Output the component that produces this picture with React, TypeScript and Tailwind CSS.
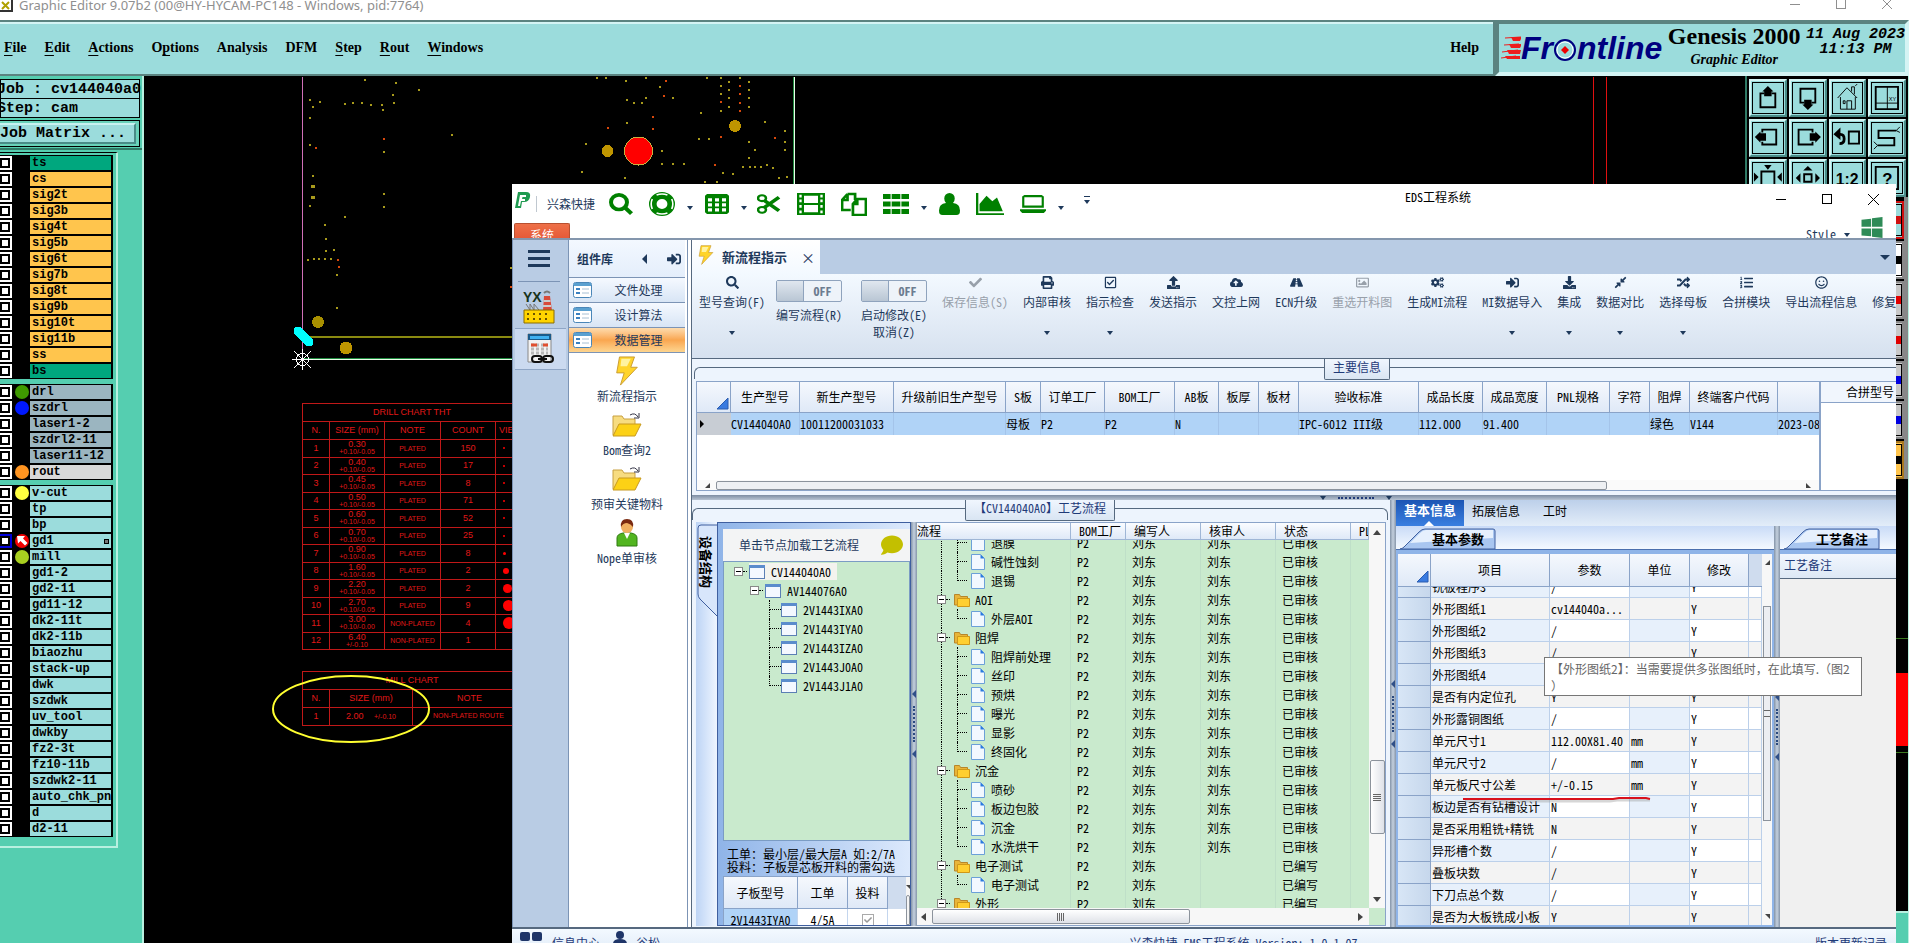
import type { JSX, ReactNode } from 'react';
import {
  FaCheck,
  FaCloudUploadAlt,
  FaCogs,
  FaComment,
  FaCompressAlt,
  FaDownload,
  FaListOl,
  FaPrint,
  FaRandom,
  FaRegCheckSquare,
  FaRegImage,
  FaRegSmile,
  FaRoad,
  FaSearch,
  FaSignInAlt,
  FaUpload
} from 'react-icons/fa';

type Layer = { name: string; dot?: string; active?: boolean };
type Status = '已审核' | '已编写';
type ProcessRow = { name: string; kind: 'folder' | 'step'; last?: boolean; reviewed: boolean; status: Status };

function cx(...classNames: Array<string | false | null | undefined>): string {
  return classNames.filter(Boolean).join(' ');
}

const signalLayers = ['cs', 'sig2t', 'sig3b', 'sig4t', 'sig5b', 'sig6t', 'sig7b', 'sig8t', 'sig9b', 'sig10t', 'sig11b', 'ss'];

const drillLayers: Layer[] = [
  { name: 'drl', dot: 'bg-[#3f9a00]' },
  { name: 'szdrl', dot: 'bg-[#0018ff]' },
  { name: 'laser1-2' },
  { name: 'szdrl2-11' },
  { name: 'laser11-12' }
];

const miscLayers: Layer[] = [
  { name: 'v-cut', dot: 'bg-[#ffff40]' },
  { name: 'tp' },
  { name: 'bp' },
  { name: 'gd1', dot: 'bg-[#f00000]', active: true },
  { name: 'mill', dot: 'bg-[#a9d020]' },
  { name: 'gd1-2' },
  { name: 'gd2-11' },
  { name: 'gd11-12' },
  { name: 'dk2-11t' },
  { name: 'dk2-11b' },
  { name: 'biaozhu' },
  { name: 'stack-up' },
  { name: 'dwk' },
  { name: 'szdwk' },
  { name: 'uv_tool' },
  { name: 'dwkby' },
  { name: 'fz2-3t' },
  { name: 'fz10-11b' },
  { name: 'szdwk2-11' },
  { name: 'auto_chk_pnl' },
  { name: 'd' },
  { name: 'd2-11' }
];

const menus: Array<[string, string, string]> = [
  ['', 'F', 'ile'],
  ['', 'E', 'dit'],
  ['', 'A', 'ctions'],
  ['O', 'p', 'tions'],
  ['', '', 'Analysis'],
  ['', '', 'DFM'],
  ['', 'S', 'tep'],
  ['', 'R', 'out'],
  ['', 'W', 'indows']
];

const drillRows: Array<[string, string, string, string, string]> = [
  ['1', '0.30', '+0.10/-0.05', 'PLATED', '150'],
  ['2', '0.40', '+0.10/-0.05', 'PLATED', '17'],
  ['3', '0.45', '+0.10/-0.05', 'PLATED', '8'],
  ['4', '0.50', '+0.10/-0.05', 'PLATED', '71'],
  ['5', '0.60', '+0.10/-0.05', 'PLATED', '52'],
  ['6', '0.70', '+0.10/-0.05', 'PLATED', '25'],
  ['7', '0.90', '+0.10/-0.05', 'PLATED', '8'],
  ['8', '1.60', '+0.10/-0.05', 'PLATED', '2'],
  ['9', '2.20', '+0.10/-0.05', 'PLATED', '2'],
  ['10', '2.70', '+0.10/-0.05', 'PLATED', '9'],
  ['11', '3.00', '+0.10/-0.00', 'NON-PLATED', '4'],
  ['12', '6.40', '+/-0.10', 'NON-PLATED', '1']
];

const drillMarks = [2, 2, 2, 2, 2, 2, 3, 6, 9, 11, 12, 0];

const pads: Array<[number, number]> = [
  [365, 80], [396, 83], [419, 90], [393, 95], [394, 103], [310, 100], [320, 102], [313, 107], [310, 118],
  [345, 104], [353, 103], [362, 103], [371, 105], [382, 105], [383, 110], [310, 145], [384, 152],
  [452, 135], [313, 176], [310, 206], [384, 194], [384, 207], [345, 217], [325, 225],
  [326, 239], [326, 251], [334, 250], [308, 260], [314, 259], [319, 259], [325, 259], [331, 259],
  [337, 275], [337, 308], [511, 268], [597, 78], [606, 78], [626, 81], [646, 78], [660, 87],
  [673, 98], [627, 100], [634, 103], [642, 103], [646, 98], [627, 123],
  [586, 144], [662, 151], [662, 164], [673, 164], [684, 164], [582, 172], [625, 178], [701, 113], [699, 139], [709, 139],
  [723, 173], [733, 174], [705, 182], [717, 182], [749, 142], [755, 150], [749, 158], [743, 167],
  [750, 167], [755, 167], [761, 167], [767, 165], [773, 168], [779, 178], [787, 177], [785, 150], [785, 142],
  [785, 131], [765, 122], [707, 78], [721, 78], [740, 78], [721, 86], [729, 82], [749, 82], [729, 90], [749, 90],
  [721, 94], [729, 98], [749, 98], [721, 111], [729, 107], [749, 107]
];

const redPads: Array<[number, number]> = [
  [316, 148], [384, 139], [338, 260], [339, 267], [511, 287], [666, 81], [664, 96], [653, 117], [653, 129], [608, 128],
  [721, 137], [715, 165], [775, 138], [740, 86], [740, 94], [740, 103], [721, 102], [740, 111]
];

const infoColumns: Array<[string, string, string]> = [
  ['生产型号', 'CV144040A0', 'w-[69px]'],
  ['新生产型号', '10011200031033', 'w-[94px]'],
  ['升级前旧生产型号', '', 'w-[112px]'],
  ['S板', '母板', 'w-[35px]'],
  ['订单工厂', 'P2', 'w-[64px]'],
  ['BOM工厂', 'P2', 'w-[70px]'],
  ['AB板', 'N', 'w-[44px]'],
  ['板厚', '', 'w-[40px]'],
  ['板材', '', 'w-[40px]'],
  ['验收标准', 'IPC-6012 III级', 'w-[120px]'],
  ['成品长度', '112.000', 'w-[64px]'],
  ['成品宽度', '91.400', 'w-[64px]'],
  ['PNL规格', '', 'w-[63px]'],
  ['字符', '', 'w-[40px]'],
  ['阻焊', '绿色', 'w-[40px]'],
  ['终端客户代码', 'V144', 'w-[88px]'],
  ['', '2023-08', 'w-[42px]']
];

const processRows: ProcessRow[] = [
  { name: '退膜', kind: 'step', reviewed: true, status: '已审核' },
  { name: '碱性蚀刻', kind: 'step', reviewed: true, status: '已审核' },
  { name: '退锡', kind: 'step', last: true, reviewed: true, status: '已审核' },
  { name: 'AOI', kind: 'folder', reviewed: true, status: '已审核' },
  { name: '外层AOI', kind: 'step', last: true, reviewed: true, status: '已审核' },
  { name: '阻焊', kind: 'folder', reviewed: true, status: '已审核' },
  { name: '阻焊前处理', kind: 'step', reviewed: true, status: '已审核' },
  { name: '丝印', kind: 'step', reviewed: true, status: '已审核' },
  { name: '预烘', kind: 'step', reviewed: true, status: '已审核' },
  { name: '曝光', kind: 'step', reviewed: true, status: '已审核' },
  { name: '显影', kind: 'step', reviewed: true, status: '已审核' },
  { name: '终固化', kind: 'step', last: true, reviewed: true, status: '已审核' },
  { name: '沉金', kind: 'folder', reviewed: true, status: '已审核' },
  { name: '喷砂', kind: 'step', reviewed: true, status: '已审核' },
  { name: '板边包胶', kind: 'step', reviewed: true, status: '已审核' },
  { name: '沉金', kind: 'step', reviewed: true, status: '已审核' },
  { name: '水洗烘干', kind: 'step', last: true, reviewed: true, status: '已审核' },
  { name: '电子测试', kind: 'folder', reviewed: false, status: '已编写' },
  { name: '电子测试', kind: 'step', last: true, reviewed: false, status: '已编写' },
  { name: '外形', kind: 'folder', reviewed: false, status: '已编写' }
];

const paramRows: Array<[string, string, string]> = [
  ['铣板程序3', '/', ''],
  ['外形图纸1', 'cv144040a...', ''],
  ['外形图纸2', '/', ''],
  ['外形图纸3', '/', ''],
  ['外形图纸4', '/', ''],
  ['是否有内定位孔', 'Y', ''],
  ['外形露铜图纸', '/', ''],
  ['单元尺寸1', '112.00X81.40', 'mm'],
  ['单元尺寸2', '/', 'mm'],
  ['单元板尺寸公差', '+/-0.15', 'mm'],
  ['板边是否有钻槽设计', 'N', ''],
  ['是否采用粗铣+精铣', 'N', ''],
  ['异形槽个数', '/', ''],
  ['叠板块数', '/', ''],
  ['下刀点总个数', '/', ''],
  ['是否为大板铣成小板', 'Y', '']
];

/* ---------- Genesis 2000 (background window) ---------- */

function LayerRow({ layer, color }: { layer: Layer; color: string }): JSX.Element {
  return (
    <label className="flex h-4 items-center bg-black">
      <input
        type="checkbox"
        aria-label={layer.name}
        className={cx(
          'mr-0.5 h-3.5 w-3 shrink-0 appearance-none border-y-2 border-r-2 bg-black bg-[linear-gradient(#fff,#fff)] bg-size-[6px_6px] bg-position-[2px_2px] bg-no-repeat',
          layer.active ? 'border-[#0000d8]' : 'border-white'
        )}
      />
      <span className="flex w-4 shrink-0 justify-center">
        {layer.dot ? (
          <span className={cx('flex h-3.5 w-3.5 items-center justify-center rounded-full', layer.dot)}>
            {layer.active ? (
              <svg viewBox="0 0 14 14" className="h-3.5 w-3.5" fill="#fff" aria-hidden="true">
                <path d="M2 2h8L8 4.500l4.500 4.500-2.500 2.500L5.500 7 3 9.500z" />
              </svg>
            ) : null}
          </span>
        ) : null}
      </span>
      <span className={cx('flex h-3.5 w-[81px] items-center justify-between overflow-hidden pl-0.5 text-[12px] leading-3.5 font-bold whitespace-nowrap', color)}>
        {layer.name}
        {layer.active ? <span className="mr-0.5 h-[5px] w-[5px] border border-black bg-[#777]" /> : null}
      </span>
    </label>
  );
}

function Sidebar(): JSX.Element {
  return (
    <aside className="w-36 shrink-0 overflow-hidden border-r-2 border-[#b8f0e0] bg-[#55ceb0] font-['Liberation_Mono',monospace]">
      <div className="border-b-2 border-[#2f7a66] pt-[3px] pb-px">
        <div className="mr-0.5 border border-black bg-[#9bdcdc] text-[15px] leading-[19px] font-bold whitespace-nowrap">
          <div className="-ml-1 h-[18px]">Job : cv144040a0</div>
          <div className="h-[19px] border-t border-black">
            <span className="-ml-1">Step: cam</span>
          </div>
        </div>
        <div className="mt-0.5 mr-0.5 border border-l-0 border-black bg-[#69d2ba] py-0.5 pr-[3px]">
          <button className="block h-[21px] w-full border-t-2 border-r-2 border-b-2 border-t-[#c8f2f0] border-r-[#4a8c88] border-b-[#4a8c88] bg-[#9bdcdc] text-left text-[15px] leading-4 font-bold">Job Matrix ...</button>
        </div>
      </div>
      <div className="mt-0.5 w-[118px] border-t border-r-2 border-b-2 border-t-black border-r-[#b8f0e0] border-b-[#b8f0e0] pt-0.5 pb-[9px]">
        <div className="w-[113px] space-y-[5px]">
          <div>
            <LayerRow layer={{ name: 'ts' }} color="bg-[#00a77e]" />
            {signalLayers.map(name => (
              <LayerRow key={name} layer={{ name }} color="bg-[#ffc54d]" />
            ))}
            <LayerRow layer={{ name: 'bs' }} color="bg-[#00a77e]" />
          </div>
          <div>
            {drillLayers.map(layer => (
              <LayerRow key={layer.name} layer={layer} color="bg-[#9bb5c0]" />
            ))}
            <LayerRow layer={{ name: 'rout', dot: 'bg-[#ff9420]' }} color="bg-[#d9d9d9]" />
          </div>
          <div>
            {miscLayers.map(layer => (
              <LayerRow key={layer.name} layer={layer} color="bg-[#9bdcdc]" />
            ))}
          </div>
        </div>
      </div>
    </aside>
  );
}

function Canvas(): JSX.Element {
  const cell = 'border border-[#c01818] p-0 text-center font-normal';
  return (
    <div className="relative min-w-0 flex-1 overflow-hidden bg-black font-['Liberation_Sans',sans-serif] text-[9px] text-[#e01818]">
      <svg className="absolute inset-0 h-full w-full" shapeRendering="crispEdges" aria-hidden="true">
        <g transform="translate(-144,-76)">
          <path d="M302.500 77V358" stroke="#d070b8" />
          <path d="M306 337H2000" stroke="#8a8a10" strokeWidth="2" />
          <path d="M303 358.500H2000" stroke="#208a40" />
          <path d="M303 359.500H2000M794.500 77V300" stroke="#e8ffe8" />
          <path d="M793.500 77V300" stroke="#208a40" />
          <path d="M1593.500 77V400M1606.500 77V400" stroke="#e01010" />
          {pads.map(([x, y]) => (
            <rect key={`${x}-${y}`} x={x - 1} y={y - 1} width="2" height="2" fill="#a89a1c" />
          ))}
          {redPads.map(([x, y]) => (
            <rect key={`${x}-${y}`} x={x - 1} y={y - 1} width="2" height="2" fill="#d8480c" />
          ))}
          <path d="M311 185h4v3h-4zM311 196h4v3h-4z" fill="#a89a1c" />
          <circle cx="638.500" cy="151" r="14" fill="#f00" stroke="#c8b040" />
          <circle cx="607.500" cy="151" r="6" fill="#bf9500" />
          <circle cx="735" cy="126" r="6" fill="#bf9500" />
          <circle cx="318" cy="322" r="6" fill="#a89000" />
          <circle cx="346" cy="348" r="6.500" fill="#bf9500" />
          <path d="M298 331L309 342" stroke="#00ffff" strokeWidth="9" strokeLinecap="round" />
          <g stroke="#fff" fill="none">
            <circle cx="302.500" cy="359.500" r="6" />
            <path d="M292 359.500H313M302.500 349V370M294 351L311 368M311 351L294 368" />
          </g>
        </g>
      </svg>
      <table className="absolute top-[327px] left-[158px] h-[247px] w-[260px] table-fixed border-collapse leading-[9px]">
        <colgroup>
          <col className="w-[27px]" />
          <col className="w-[55px]" />
          <col className="w-[56px]" />
          <col className="w-[55px]" />
          <col />
        </colgroup>
        <thead>
          <tr className="h-[18px]">
            <th colSpan={5} className="border border-[#c01818] p-0 pr-10 font-normal">DRILL CHART THT</th>
          </tr>
          <tr className="h-[18px]">
            <th className={cell}>N.</th>
            <th className={cell}>SIZE (mm)</th>
            <th className={cell}>NOTE</th>
            <th className={cell}>COUNT</th>
            <th className="border border-[#c01818] p-0 pl-[3px] text-left font-normal">VIEW</th>
          </tr>
        </thead>
        <tbody>
          {drillRows.map(([n, size, tolerance, note, count], i) => (
            <tr key={n}>
              <td className={cell}>{n}</td>
              <td className={cell}>
                <div className="leading-2">{size}</div>
                <div className="text-[7px] leading-2 whitespace-nowrap">{tolerance}</div>
              </td>
              <td className="border border-[#c01818] p-0 text-center text-[7px] whitespace-nowrap">{note}</td>
              <td className={cell}>{count}</td>
              <td className="border border-[#c01818] p-0">
                <span className="ml-[7px] block rounded-full bg-[#f00]" style={{ width: drillMarks[i], height: drillMarks[i] }} />
              </td>
            </tr>
          ))}
        </tbody>
      </table>
      <table className="absolute top-[595px] left-[158px] h-[54px] w-[260px] table-fixed border-collapse">
        <colgroup>
          <col className="w-[27px]" />
          <col className="w-[83px]" />
          <col />
        </colgroup>
        <thead>
          <tr className="h-[18px]">
            <th colSpan={3} className="border border-[#c01818] p-0 pr-10 font-normal">MILL CHART</th>
          </tr>
          <tr className="h-[18px]">
            <th className={cell}>N.</th>
            <th className={cell}>SIZE (mm)</th>
            <th className="border border-[#c01818] p-0 pl-11 text-left font-normal">NOTE</th>
          </tr>
        </thead>
        <tbody>
          <tr className="h-[18px]">
            <td className={cell}>1</td>
            <td className={cell}>
              2.00 <span className="ml-2 text-[7px]">+/-0.10</span>
            </td>
            <td className="border border-[#c01818] p-0 pl-5 text-left text-[7px]">NON-PLATED ROUTE</td>
          </tr>
        </tbody>
      </table>
      <svg className="absolute top-[598px] left-[126px] h-[70px] w-[162px]" fill="none" aria-hidden="true">
        <ellipse cx="81" cy="35" rx="78" ry="33" stroke="#ffff30" strokeWidth="2" />
      </svg>
    </div>
  );
}

const viewTools: Array<[string, ReactNode]> = [
  ['Pan up', <><path d="M12 11H8v15h16V11h-4" /><path d="M16 3l6 6h-2v5h-8V9h-2z" fill="#000" stroke="none" /></>],
  ['Pan down', <><path d="M12 21H8V6h16v15h-4" /><path d="M16 29l6-6h-2v-5h-8v5h-2z" fill="#000" stroke="none" /></>],
  ['Home', <g strokeWidth="1"><path d="M5 16L15 5l11 11M8 15v13h16V15M20 9V4h3v8M15 28v-9h5v9M11 19h2v3h-2zM24 3l2-2" /></g>],
  ['Coordinates', <><path d="M4 4h24v24H4z" /><g strokeWidth="1"><path d="M16.500 4v24M4 21.500h24" /></g><text x="18" y="19" fontSize="6" fill="#000" stroke="none">XY</text></>],
  ['Pan left', <><path d="M10 10V7h15v16H10v-3" /><path d="M2 15l6-6v2h6v8H8v2z" fill="#000" stroke="none" /></>],
  ['Pan right', <><path d="M21 10V7H6v16h15v-3" /><path d="M30 15l-6-6v2h-6v8h6v2z" fill="#000" stroke="none" /></>],
  ['Previous view', <><path d="M17 9h11v13H17z" /><path d="M3 12h5q4 0 4 5t-5 5" strokeWidth="3" /><path d="M2 12l5-5v9z" fill="#000" /></>],
  ['Serpentine', <><path d="M26 8H7v8h17v8H6" /><path d="M26 8l4-4M26 8l4 2M6 24l-4-4M6 24l-4 4" strokeWidth="1" /></>],
  ['Zoom in', <><path d="M9 9h14v20H9z" /><path d="M12 2h8l-4 5zM1 10v10l5-5zM31 10v10l-5-5z" fill="#000" stroke="none" /></>],
  ['Zoom out', <><path d="M12 12h8v8h-8z" /><path d="M16 3l5 5H11zM3 16l5-5v10zM29 16l-5-5v10z" fill="#000" stroke="none" /></>],
  ['Zoom ratio', <text x="3" y="23" fontSize="17" fontWeight="bold" fill="#000" stroke="none">1:2</text>],
  ['Help', <><path d="M4 4h24v24H4z" /><text x="11" y="23" fontSize="18" fontWeight="bold" fill="#000" stroke="none">?</text></>]
];

function Palette(): JSX.Element {
  const sideTones = ['bg-[#9bdcdc] border-[#d01010]', 'bg-white border-[#888]', 'bg-[#c8c8c8] border-[#888]', 'bg-[#c8c8c8] border-[#888]', 'bg-[#c8c8c8] border-[#888]', 'bg-[#c8c8c8] border-[#888]', 'bg-[#ffc54d] border-[#a87820]'];
  const sideMarks = ['bg-[#d01010]', 'bg-black', 'bg-[#e00000]', 'bg-[#e00000]', 'bg-[#0000e0]', 'bg-[#0000e0]', 'bg-black'];
  return (
    <aside className="flex w-[164px] shrink-0 flex-col border-r border-[#b8f0e0] bg-black">
      <div className="grid grid-cols-4 gap-0.5 border-l-2 border-[#2f7a66] px-0.5 pt-[3px] font-['Liberation_Sans',sans-serif]">
        {viewTools.map(([label, icon]) => (
          <button key={label} aria-label={label} className="h-[38px] border-2 border-t-[#d4f4f4] border-r-[#4a8c88] border-b-[#4a8c88] border-l-[#d4f4f4] bg-[#9bdcdc] p-px">
            <svg viewBox="0 0 32 32" className="h-full w-full border border-black" fill="none" stroke="#000" strokeWidth="2" aria-hidden="true">{icon}</svg>
          </button>
        ))}
      </div>
      <div className="flex flex-col items-end gap-0.5 border-r-4 border-[#888] pt-1">
        {sideTones.map((tone, i) => (
          <button key={i} aria-label={`Tool ${i + 1}`} className={cx('flex h-[38px] w-[38px] items-center justify-end border-2', tone)}>
            <span className="flex h-8 w-8 items-center justify-end border border-black">
              <span className={cx('h-2 w-1.5', sideMarks[i])} />
            </span>
          </button>
        ))}
      </div>
      <div className="mt-[159px] border-t border-[#3a7a20] pt-[34px]">
        <div className="h-[73px] bg-[#f00]" />
        <div className="mt-1.5 border-t border-[#3a7a20]" />
      </div>
      <div className="mt-[158px] flex-1 border-t-2 border-[#b8f0e0] bg-[#55ceb0]" />
    </aside>
  );
}

function Brand(): JSX.Element {
  return (
    <div className="flex h-14 w-[414px] shrink-0 items-center justify-between border-4 border-t-[#5b8380] border-r-[#d4f4f4] border-b-[#d4f4f4] border-l-[#5b8380] bg-[#9bdcdc] pl-0.5 whitespace-nowrap">
      <div className="flex items-center font-['Liberation_Sans',sans-serif] text-[32px] leading-8 font-bold text-[#000080] italic">
        <svg viewBox="0 0 20 24" className="h-6 w-5" aria-hidden="true">
          <path d="M10 1h11l-2 4h-7zM8 8h13l-2 4H10zM6 14h14l-1 4H8zM4 20h15v3H6z" fill="#ee1c1c" />
          <path d="M4 2L20 1M3 9L18 8M1 16L17 14M0 22L15 20" stroke="#ee1c1c" />
        </svg>
        <span>Fr</span>
        <svg viewBox="0 0 24 24" className="mt-1 h-6 w-6" fill="none" stroke="#000080" strokeWidth="2" aria-hidden="true">
          <circle cx="12" cy="12" r="10" />
          <circle cx="12" cy="12" r="8" stroke="#fff" strokeWidth="1" />
          <path d="M12 8l4 4-4 4-4-4z" fill="#e00" stroke="none" />
        </svg>
        <span>ntline</span>
      </div>
      <div className="text-center">
        <div className="text-[24px] leading-6 font-bold">Genesis 2000</div>
        <div className="text-[14px] leading-6 font-bold italic">Graphic Editor</div>
      </div>
      <div className="mb-3 text-center font-['Liberation_Mono',monospace] text-[15px] leading-[15px] font-bold italic">
        <div>11 Aug 2023</div>
        <div>11:13 PM</div>
      </div>
    </div>
  );
}

/* ---------- EDS window ---------- */

function Caret({ className }: { className?: string }): JSX.Element {
  return <span aria-hidden="true" className={cx('inline-block h-0 w-0 border-x-3 border-t-4 border-x-transparent border-t-[#1e395b]', className)} />;
}

function Quick({ label, children, className }: { label: string; children: ReactNode; className: string }): JSX.Element {
  return (
    <button aria-label={label} className={cx('shrink-0', className)}>
      <svg viewBox="0 0 24 24" className="h-full w-full" fill="#008000" preserveAspectRatio="none" aria-hidden="true">{children}</svg>
    </button>
  );
}

function QuickAccess(): JSX.Element {
  return (
    <div className="flex h-10 shrink-0 items-center gap-4">
      <svg viewBox="0 0 18 18" className="mb-2 ml-0.5 h-[18px] w-[18px]" aria-hidden="true">
        <path d="M4 1h8q5 0 4 5t-6 5H8l-1 6H1z" fill="#1f9a50" />
        <path d="M6 4h6v2H8.500L8 8h3v2H7l-1 5H4z" fill="#fff" />
      </svg>
      <span className="-ml-3 border-l border-[#c0c8d0] pl-2.5 text-[#1e395b]">兴森快捷</span>
      <Quick label="查找" className="-ml-0.5 h-[22px] w-6">
        <path fillRule="evenodd" d="M10 0a10 10 0 1 1 0 20A10 10 0 0 1 10 0zm0 4a6 6 0 1 0 0 12 6 6 0 0 0 0-12z" />
        <path d="M14 17l3-3 7 7-3 3z" />
      </Quick>
      <Quick label="帮助" className="h-6 w-[26px]">
        <path fillRule="evenodd" d="M12 0a12 12 0 1 1 0 24 12 12 0 0 1 0-24zm0 7a5 5 0 1 0 0 10 5 5 0 0 0 0-10z" />
        <path d="M7 3q5-2 10 0M7 21q5 2 10 0M3 7q-2 5 0 10M21 7q2 5 0 10" fill="none" stroke="#fff" strokeWidth="1.500" />
      </Quick>
      <Caret className="-mx-1 mt-2" />
      <Quick label="表格" className="h-5 w-6">
        <path fillRule="evenodd" d="M2 0h20l2 2v20l-2 2H2l-2-2V2zM3 5v4h4V5zm7 0v4h4V5zm7 0v4h4V5zM3 11v4h4v-4zm7 0v4h4v-4zm7 0v4h4v-4zM3 17v4h4v-4zm7 0v4h4v-4zm7 0v4h4v-4z" />
      </Quick>
      <Caret className="-mx-1 mt-2" />
      <Quick label="剪切" className="-ml-0.5 h-5 w-6">
        <g fill="none" stroke="#008000">
          <ellipse cx="5" cy="5" rx="4" ry="3.500" strokeWidth="2.500" />
          <ellipse cx="5" cy="19" rx="4" ry="3.500" strokeWidth="2.500" />
          <path d="M7 7.500L22 20M7 16.500L22 4" strokeWidth="4" />
        </g>
      </Quick>
      <Quick label="影片" className="h-[22px] w-7">
        <path fillRule="evenodd" d="M0 0h24v24H0zM6 3v8h12V3zm0 10v8h12v-8zM2 2v3h2V2zm0 5v3h2V7zm0 6v3h2v-3zm0 6v3h2v-3zM20 2v3h2V2zm0 5v3h2V7zm0 6v3h2v-3zm0 6v3h2v-3z" />
      </Quick>
      <Quick label="复制" className="h-6 w-[26px]">
        <path d="M6 2h7v6M6 2L1 8v10h8M6 2v6H1M15 7h8v16H11V12zM15 7v5h-4" fill="none" stroke="#008000" strokeWidth="2.500" />
      </Quick>
      <Quick label="列表" className="h-5 w-[26px]">
        <path d="M0 0h7v6H0zM8 0h8v6H8zM17 0h7v6h-7zM0 9h7v6H0zM8 9h8v6H8zM17 9h7v6h-7zM0 18h7v6H0zM8 18h8v6H8zM17 18h7v6h-7z" />
      </Quick>
      <Caret className="-mx-1 mt-2" />
      <Quick label="用户" className="h-[22px] w-[21px]">
        <path d="M12 0a6 6 0 0 1 6 6q0 3-2 5 8 1 8 8 0 5-4 5H4q-4 0-4-5 0-7 8-8-2-2-2-5a6 6 0 0 1 6-6z" />
      </Quick>
      <Quick label="图表" className="h-[22px] w-7">
        <path d="M0 0h2v22h22v2H0zM3 20V12l6-9 5 6 4-4 5 15z" />
      </Quick>
      <Quick label="电脑" className="h-[18px] w-[26px]">
        <path fillRule="evenodd" d="M4 0h16l2 2v15H2V2zm0 3v11h16V3zM0 19h24v2l-2 3H2l-2-3z" />
      </Quick>
      <Caret className="-mx-1 mt-2" />
      <span className="ml-2 border-t border-[#1e395b]">
        <Caret className="mb-1.5" />
      </span>
    </div>
  );
}

function ToolItem({ icon, label, menu, disabled }: { icon: ReactNode; label: string; menu?: boolean; disabled?: boolean }): JSX.Element {
  return (
    <button disabled={disabled} className={cx('flex shrink-0 flex-col items-center pt-px whitespace-nowrap', disabled && 'text-[#98a0aa]')}>
      <span className="flex h-3.5 items-center text-[13px]">{icon}</span>
      <span className="mt-1 leading-[18px]">{label}</span>
      {menu ? <Caret className="mt-5" /> : null}
    </button>
  );
}

function ToggleItem({ label, extra, className }: { label: string; extra?: string; className?: string }): JSX.Element {
  return (
    <button role="switch" aria-checked="false" className={cx('flex shrink-0 flex-col items-center pt-1.5 whitespace-nowrap', className)}>
      <span className="flex h-[22px] w-[66px] rounded-xs border border-[#8fa3bd] bg-[#eef3f9]">
        <span className="w-[27px] border-r border-[#8fa3bd] bg-linear-to-b from-[#e0e7ef] to-[#b9c6d4]" />
        <span className="flex-1 text-center leading-5 font-bold text-[#6c7c90]">OFF</span>
      </span>
      <span className="mt-1 leading-[18px]">{label}</span>
      {extra ? <span className="leading-4">{extra}</span> : null}
    </button>
  );
}

function Ribbon(): JSX.Element {
  return (
    <div className="flex h-[85px] shrink-0 items-start gap-[15px] overflow-hidden border-b border-[#56697f] bg-linear-to-b from-[#f3f9ff] to-[#d6e1ef] pl-[7px] text-[#1e395b]">
      <ToolItem icon={<FaSearch />} label="型号查询(F)" menu />
      <ToggleItem className="-ml-1" label="编写流程(R)" />
      <ToggleItem className="ml-1" label="启动修改(E)" extra="取消(Z)" />
      <ToolItem icon={<FaCheck />} label="保存信息(S)" disabled />
      <ToolItem icon={<FaPrint />} label="内部审核" menu />
      <ToolItem icon={<FaRegCheckSquare />} label="指示检查" menu />
      <ToolItem icon={<FaUpload />} label="发送指示" />
      <ToolItem icon={<FaCloudUploadAlt />} label="文控上网" />
      <ToolItem icon={<FaRoad />} label="ECN升级" />
      <ToolItem icon={<FaRegImage />} label="重选开料图" disabled />
      <ToolItem icon={<FaCogs />} label="生成MI流程" />
      <ToolItem icon={<FaSignInAlt />} label="MI数据导入" menu />
      <ToolItem icon={<FaDownload />} label="集成" menu />
      <ToolItem icon={<FaCompressAlt />} label="数据对比" menu />
      <ToolItem icon={<FaRandom />} label="选择母板" menu />
      <ToolItem icon={<FaListOl />} label="合拼模块" />
      <ToolItem icon={<FaRegSmile />} label="导出流程信息" />
      <ToolItem icon={null} label="修复" />
    </div>
  );
}

function Bolt({ className }: { className: string }): JSX.Element {
  return (
    <svg viewBox="0 0 24 32" className={className} aria-hidden="true">
      <path d="M4 1h16l-4 11h7L5 31l4-13H1z" fill="#ffd42a" stroke="#c89a30" />
      <path d="M6 3h10l-4 8H5z" fill="#fff3a0" />
    </svg>
  );
}

function OpenFolder(): JSX.Element {
  return (
    <svg viewBox="0 0 30 26" className="h-[26px] w-[30px]" aria-hidden="true">
      <path d="M1 4h9l2 3h11v16H1z" fill="#f7dc80" stroke="#c8a040" />
      <path d="M7 12h22l-6 12H1z" fill="#fcd116" stroke="#c89a20" />
      <path d="M18 3q5-3 8 2M27 1v5h-5" fill="none" stroke="#334" />
    </svg>
  );
}

function WindowGlyph(): JSX.Element {
  return (
    <svg viewBox="0 0 16 14" className="h-3.5 w-4 shrink-0" aria-hidden="true">
      <rect x="0.500" y="0.500" width="15" height="13" fill="#f4f8ff" stroke="#5b7fb4" />
      <path d="M0 0h16v3H0z" fill="#5b8ccc" />
    </svg>
  );
}

function FormGlyph(): JSX.Element {
  return (
    <svg viewBox="0 0 19 16" className="h-4 w-[19px] shrink-0" aria-hidden="true">
      <rect x="0.500" y="0.500" width="18" height="15" rx="2" fill="#fff" stroke="#4a86b8" />
      <path d="M1 1h17v3H1z" fill="#5aa0d0" />
      <path d="M3 7h4M3 11h4" stroke="#3a80c0" strokeWidth="2" />
      <path d="M9 7h7M9 11h7" stroke="#a8c0d4" />
    </svg>
  );
}

function Rail(): JSX.Element {
  return (
    <nav className="flex w-14 shrink-0 flex-col items-center border-l border-[#7c94b5] bg-[#b9cce4] pr-1">
      <button aria-label="菜单" className="mt-2.5 flex w-[22px] flex-col gap-1">
        <span className="h-[3px] bg-[#1e395b]" />
        <span className="h-[3px] bg-[#1e395b]" />
        <span className="h-[3px] bg-[#1e395b]" />
      </button>
      <span className="mt-3.5 w-[42px] border-t border-[#7c94b5]" />
      <button aria-label="YX" className="mt-2">
        <svg viewBox="0 0 32 34" className="h-[34px] w-8" aria-hidden="true">
          <text x="0" y="12" fontSize="14" fontWeight="bold" fill="#17331c" fontFamily="Liberation Sans, sans-serif">YX</text>
          <path d="M21 6h6l2 15h-9z" fill="#d84a3a" />
          <path d="M20.500 11h7M20 16h8" stroke="#ccc" strokeWidth="2" />
          <path d="M21 3q3-3 6 0" stroke="#777" strokeWidth="2" fill="none" />
          <path d="M3 14l4 6v-6l4 6v-6l5 6" fill="none" stroke="#777" />
          <path d="M1 20h30v13H1z" fill="#ffd400" stroke="#8a6d00" />
          <path d="M4 24h24M4 29h24" stroke="#6b5400" strokeWidth="2" strokeDasharray="2 4" />
        </svg>
      </button>
      <button aria-label="日历" className="mt-1 -mr-1 flex h-[42px] w-full items-center justify-center border-y border-[#8fa6c6] bg-[#cbdaf0]">
        <svg viewBox="0 0 28 32" className="h-8 w-7" aria-hidden="true">
          <path d="M1 1h23v28H1z" fill="#f2f2f2" stroke="#888" />
          <path d="M1 1h23v6H1z" fill="#1a5a8a" />
          <path d="M3 3h19v3H3z" fill="#40b0f0" />
          <path d="M4 12h17M4 16h17M4 20h17" stroke="#b8b8b8" strokeWidth="3" strokeDasharray="3 2" />
          <path d="M4 12h6M16 12h5" stroke="#e05030" strokeWidth="3" />
          <g fill="none" stroke="#111" strokeWidth="2">
            <rect x="5" y="23" width="10" height="6" rx="3" />
            <rect x="16" y="23" width="10" height="6" rx="3" />
            <path d="M11 26h9" />
          </g>
        </svg>
      </button>
    </nav>
  );
}

function Library(): JSX.Element {
  const entries: Array<[string, ReactNode]> = [
    ['新流程指示', <Bolt className="h-[30px] w-6" />],
    ['Bom查询2', <OpenFolder />],
    ['预审关键物料', <OpenFolder />],
    [
      'Nope单审核',
      <svg viewBox="0 0 24 30" className="h-[30px] w-6" aria-hidden="true">
        <path d="M2 28V20q0-4 6-5h8q6 1 6 5v8z" fill="#52b520" stroke="#2f7a10" />
        <circle cx="12" cy="9" r="6" fill="#f0b060" />
        <path d="M6 9q-1-8 6-8t6 8q-2-3-6-4-4 0-6 4z" fill="#7a2a10" />
        <path d="M9 15h6l-3 6z" fill="#fff" />
      </svg>
    ]
  ];
  const row = 'flex h-[25px] w-full items-center border-b border-[#7c94b5] pl-1';
  return (
    <div className="flex w-[120px] shrink-0 flex-col border-r border-l border-[#7c94b5] bg-white pr-0.5 text-[#1e395b]">
      <div className="flex h-[37px] shrink-0 items-center bg-linear-to-b from-[#f3f8ff] to-[#e4eefb] pl-2">
        <strong className="font-bold">组件库</strong>
        <button aria-label="收起" className="ml-auto border-y-5 border-r-5 border-y-transparent border-r-[#1e395b]" />
        <button aria-label="固定" className="mr-1 ml-5">
          <FaSignInAlt className="h-3.5 w-3.5" />
        </button>
      </div>
      <div className="flex min-h-0 flex-1 flex-col border-t border-[#7c94b5] leading-6">
        <button className={cx(row, 'bg-linear-to-b from-[#f5f9ff] to-[#d8e5f5]')}>
          <FormGlyph />
          <span className="flex-1">文件处理</span>
        </button>
        <button className={cx(row, 'bg-linear-to-b from-[#f5f9ff] to-[#d8e5f5]')}>
          <FormGlyph />
          <span className="flex-1">设计算法</span>
        </button>
        <button className={cx(row, 'bg-linear-to-b from-[#fddcae] via-[#f9a64f] to-[#fdd58f]')}>
          <FormGlyph />
          <span className="flex-1">数据管理</span>
        </button>
        <div className="flex flex-col items-center pt-0.5">
          {entries.map(([label, icon]) => (
            <button key={label} className="flex h-[54px] flex-col items-center">
              <span className="flex h-8 items-center">{icon}</span>
              <span className="leading-[18px]">{label}</span>
            </button>
          ))}
        </div>
      </div>
    </div>
  );
}

function GroupTitle({ children, className }: { children: ReactNode; className?: string }): JSX.Element {
  return (
    <div className={cx('flex h-[22px] shrink-0 items-start', className)}>
      <span className="mt-2 h-3 flex-1 rounded-tl-md border-t border-l border-[#56697f]" />
      <h2 className="h-[21px] rounded-b-xs border border-t-0 border-[#56697f] bg-linear-to-b from-[#f0f6fe] to-[#d9e5f3] px-2 leading-[15px] whitespace-nowrap text-[#1f3a78]">{children}</h2>
      <span className="mt-2 h-3 flex-1 rounded-tr-md border-t border-r border-[#56697f]" />
    </div>
  );
}

const headCell = 'border-r border-b border-[#8aa3c8] bg-linear-to-b from-[#f5f8fd] to-[#dfe9f7] p-0 text-center font-normal whitespace-nowrap overflow-hidden';

function CornerCell(): JSX.Element {
  return (
    <th className={headCell} aria-label="全选">
      <svg viewBox="0 0 32 30" className="ml-auto block h-[30px] w-8" aria-hidden="true">
        <path d="M30 16v11H19z" fill="#3a7be0" stroke="#2a5cb0" />
      </svg>
    </th>
  );
}

function MainInfo(): JSX.Element {
  return (
    <section className="flex h-[136px] shrink-0 flex-col overflow-hidden bg-[#edf4fd] pb-1">
      <GroupTitle className="-mr-[124px] pl-0.5">主要信息</GroupTitle>
      <div className="ml-1 flex min-h-0 flex-1 border-y border-l border-[#8aa3c8] bg-white">
        <div className="flex min-w-0 flex-1 flex-col">
          <table className="w-full table-fixed border-separate border-spacing-0 text-black">
            <colgroup>
              <col className="w-[34px]" />
              {infoColumns.map(([, , width], i) => (
                <col key={i} className={width} />
              ))}
            </colgroup>
            <thead>
              <tr className="h-[31px]">
                <CornerCell />
                {infoColumns.map(([name], i) => (
                  <th key={i} className={headCell}>{name}</th>
                ))}
              </tr>
            </thead>
            <tbody>
              <tr className="h-[22px] bg-[#b0d3f7]">
                <td className="bg-[#c8cdd4] p-0">
                  <span className="ml-[3px] block h-0 w-0 border-y-4 border-l-4 border-y-transparent border-l-black" />
                </td>
                {infoColumns.map(([, value], i) => (
                  <td key={i} className="overflow-hidden border-r border-[#a4c4ea] p-0 whitespace-nowrap">{value}</td>
                ))}
              </tr>
            </tbody>
          </table>
          <div className="mt-auto flex h-2.5 items-center gap-1.5 bg-[#fafafa] pl-2">
            <span className="h-0 w-0 border-b-5 border-l-5 border-b-[#444] border-l-transparent" />
            <span className="h-[9px] w-4/5 rounded-xs border border-[#8c939c] bg-[#eef0f3]" />
            <span className="mr-2 ml-auto h-0 w-0 border-r-5 border-b-5 border-r-transparent border-b-[#444]" />
          </div>
        </div>
        <div className="w-[77px] shrink-0 overflow-hidden border-l-2 border-[#8aa3c8]">
          <div className="h-[21px] border-b border-[#8aa3c8] bg-[#f1f6fd] pr-0.5 text-right leading-5 text-black">合拼型号</div>
        </div>
      </div>
    </section>
  );
}

function Expander(): JSX.Element {
  return (
    <button aria-label="折叠" className="flex h-[9px] w-[9px] shrink-0 items-center justify-center border border-[#888] bg-white">
      <span className="h-px w-[5px] bg-black" />
    </button>
  );
}

function DeviceTree(): JSX.Element {
  const leaves = ['2V1443IXA0', '2V1443IYA0', '2V1443IZA0', '2V1443J0A0', '2V1443J1A0'];
  return (
    <ul className="min-h-0 flex-1 border border-[#7b9cc4] bg-[#c9eacd] text-black">
      <li className="flex h-[19px] items-center pl-2.5">
        <Expander />
        <span className="mr-0.5 w-1 border-t border-dotted border-black" />
        <span className="flex h-[17px] items-center gap-1.5 bg-[#f3f3ee] pr-1.5">
          <WindowGlyph />
          CV144040A0
        </span>
      </li>
      <li className="flex h-[19px] items-center pl-[26px]">
        <Expander />
        <span className="mr-0.5 w-1 border-t border-dotted border-black" />
        <WindowGlyph />
        <span className="ml-1.5">AV144076A0</span>
      </li>
      {leaves.map((leaf, i) => (
        <li key={leaf} className="flex h-[19px] items-center pl-[45px]">
          <span className="flex h-full w-3 flex-col">
            <span className="h-2.5 border-b border-l border-dotted border-black" />
            {i < leaves.length - 1 ? <span className="flex-1 border-l border-dotted border-black" /> : null}
          </span>
          <WindowGlyph />
          <span className="ml-1.5">{leaf}</span>
        </li>
      ))}
    </ul>
  );
}

function DevicePanel(): JSX.Element {
  return (
    <div className="flex w-[219px] shrink-0 bg-[#edf4fd] pl-1">
      <div className="relative w-[21px] shrink-0 bg-linear-to-r from-[#bdd4f5] to-[#eef5ff]">
        <svg viewBox="0 0 21 94" className="absolute top-0 left-0 h-[94px] w-[21px]" aria-hidden="true">
          <path d="M21 3H5q-3 0-3 3v66q0 3 2 5l17 17" fill="#d8e6fb" stroke="#3f5f9f" />
        </svg>
        <button className="relative mt-3.5 ml-0.5 text-[13px] leading-4 font-bold text-black [text-orientation:sideways] [writing-mode:vertical-rl]">设备结构</button>
      </div>
      <div className="flex min-w-0 flex-1 flex-col border border-[#3f5f9f] bg-linear-to-r from-[#8fb4e8] to-[#dce9fc] pt-1.5 pl-[5px]">
        <div className="flex h-8 shrink-0 items-center justify-between bg-[#f3f4f5] pr-1.5 pl-4 text-[#1f3a60]">
          单击节点加载工艺流程
          <FaComment className="h-[22px] w-6 text-[#c3bf00]" />
        </div>
        <DeviceTree />
        <p className="h-[35px] shrink-0 pt-1.5 pl-1 leading-[13px] whitespace-nowrap text-black">
          工单：最小层/最大层A 如:2/7A
          <br />
          投料：子板是芯板开料的需勾选
        </p>
        <div className="flex h-[49px] shrink-0 overflow-hidden border-t border-l border-[#8aa3c8]">
          <table className="w-[182px] shrink-0 table-fixed border-separate border-spacing-0 bg-white text-center text-black">
            <thead>
              <tr className="h-8">
                <th className={cx(headCell, 'w-[74px]')}>子板型号</th>
                <th className={cx(headCell, 'w-[50px]')}>工单</th>
                <th className={cx(headCell, 'w-10')}>投料</th>
                <th className="bg-[#cfdcee]" />
              </tr>
            </thead>
            <tbody>
              <tr className="h-[22px]">
                <td className="border-r border-[#c4d6ee] bg-[#b0d3f7] p-0">2V1443IYA0</td>
                <td className="border-r border-[#c4d6ee] p-0">4/5A</td>
                <td className="border-r border-[#c4d6ee] p-0">
                  <label className="mx-auto flex h-3 w-3 items-center justify-center border border-[#aaa] text-[#999]">
                    <input type="checkbox" aria-label="投料" defaultChecked disabled className="sr-only" />
                    <FaCheck className="h-2 w-2" />
                  </label>
                </td>
                <td className="p-0" />
              </tr>
            </tbody>
          </table>
          <div className="flex flex-1 flex-col items-end bg-[#f5f5f5] pt-2">
            <span className="h-0 w-0 border-r-4 border-b-4 border-r-[#444] border-b-transparent" />
            <span className="mt-1.5 w-full flex-1 rounded-t-xs border border-[#8c939c]" />
          </div>
        </div>
      </div>
    </div>
  );
}

function Splitter(): JSX.Element {
  const arrow = 'h-0 w-0 border-y-4 border-r-4 border-y-transparent border-r-[#2f4f88]';
  return (
    <div className="flex w-1.5 shrink-0 flex-col items-center justify-center gap-2 bg-linear-to-r from-[#8494a8] via-[#c4d0de] to-[#8796aa]">
      <span className={arrow} />
      <span className="h-9 border-l-2 border-dotted border-[#2a4a80]" />
      <span className={arrow} />
    </div>
  );
}

function StepName({ row }: { row: ProcessRow }): JSX.Element {
  return (
    <span className="flex h-[19px] items-center pl-5">
      {row.kind === 'folder' ? (
        <>
          <span className="flex h-full w-[9px] flex-col items-center">
            <span className="h-[5px] border-l border-dotted border-black" />
            <Expander />
            <span className="flex-1 border-l border-dotted border-black" />
          </span>
          <span className="mr-1 w-1 border-t border-dotted border-black" />
          <svg viewBox="0 0 16 14" className="h-3.5 w-4 shrink-0" aria-hidden="true">
            <path d="M0.500 12V1.500h5l1 2h7V12z" fill="#e8b53a" stroke="#b8862a" />
            <path d="M3.500 5.500h12v8h-12z" fill="#ffcf30" stroke="#d09818" />
          </svg>
          <span className="ml-[5px]">{row.name}</span>
        </>
      ) : (
        <>
          <span className="ml-1 h-full w-4 border-l border-dotted border-black" />
          <span className="flex h-full w-2.5 flex-col">
            <span className="h-2.5 border-b border-l border-dotted border-black" />
            {row.last ? null : <span className="flex-1 border-l border-dotted border-black" />}
          </span>
          <svg viewBox="0 0 14 16" className="ml-1 h-4 w-3.5 shrink-0" aria-hidden="true">
            <path d="M0.500 0.500h9l4 4v11h-13z" fill="#f2f8ff" stroke="#6ba0d8" />
            <path d="M9.500 0.500v4h4z" fill="#2a7ae0" />
          </svg>
          <span className="ml-1.5">{row.name}</span>
        </>
      )}
    </span>
  );
}

function ProcessPanel(): JSX.Element {
  const columns = (
    <colgroup>
      <col className="w-[154px]" />
      <col className="w-[55px]" />
      <col className="w-[75px]" />
      <col className="w-[75px]" />
      <col className="w-[75px]" />
      <col />
    </colgroup>
  );
  const head = 'overflow-hidden border-r border-b border-[#9fb6d6] bg-linear-to-b from-[#fafcff] to-[#dfe9f7] p-0 pl-2 text-left font-normal whitespace-nowrap';
  const cell = 'border-r border-[#bfdfc8] p-0 pl-1.5';
  return (
    <div className="flex min-w-0 flex-1 border border-l-0 border-[#8aa3c8] text-black">
      <div className="flex min-w-0 flex-1 flex-col">
        <table className="w-full shrink-0 table-fixed border-separate border-spacing-0">
          {columns}
          <thead>
            <tr className="h-[17px]">
              <th className="border-r border-b border-[#9fb6d6] bg-linear-to-b from-[#fafcff] to-[#dfe9f7] p-0 text-left font-normal">流程</th>
              <th className={head}>BOM工厂</th>
              <th className={head}>编写人</th>
              <th className={head}>核审人</th>
              <th className={head}>状态</th>
              <th className={head}>PLM</th>
            </tr>
          </thead>
        </table>
        <div className="min-h-0 flex-1 overflow-hidden bg-[#c9eacd]">
          <table className="-mt-[7px] w-full table-fixed border-separate border-spacing-0">
            {columns}
            <tbody>
              {processRows.map((row, i) => (
                <tr key={i} className="h-[19px]">
                  <td className="border-r border-[#bfdfc8] p-0">
                    <StepName row={row} />
                  </td>
                  <td className={cell}>P2</td>
                  <td className={cell}>刘东</td>
                  <td className={cell}>{row.reviewed ? '刘东' : ''}</td>
                  <td className={cell}>{row.status}</td>
                  <td className="p-0" />
                </tr>
              ))}
            </tbody>
          </table>
        </div>
        <div className="flex h-[17px] shrink-0 items-center gap-1.5 bg-[#f7f7f7] px-1">
          <span className="h-0 w-0 border-y-4 border-r-5 border-y-transparent border-r-[#444]" />
          <span className="flex h-[15px] w-[58%] items-center justify-center rounded-xs border border-[#8c939c] bg-linear-to-b from-white to-[#dfe2e8]">
            <span className="flex h-2 w-[7px] justify-center border-x border-[#666]">
              <span className="w-[3px] border-x border-[#666]" />
            </span>
          </span>
          <span className="mr-0.5 ml-auto h-0 w-0 border-y-4 border-l-5 border-y-transparent border-l-[#444]" />
        </div>
      </div>
      <div className="flex w-4 shrink-0 flex-col items-center bg-[#f7f7f7]">
        <span className="mt-[7px] h-0 w-0 border-x-4 border-b-5 border-x-transparent border-b-[#444]" />
        <span className="mt-[225px] flex h-[74px] w-[15px] items-center justify-center rounded-xs border border-[#8c939c] bg-linear-to-r from-white to-[#dfe2e8]">
          <span className="flex h-[7px] w-2 flex-col justify-center border-y border-[#666]">
            <span className="h-[3px] border-y border-[#666]" />
          </span>
        </span>
        <span className="mt-auto mb-1.5 h-0 w-0 border-x-4 border-t-5 border-x-transparent border-t-[#444]" />
        <span className="h-[17px] w-full bg-[#c9eacd]" />
      </div>
    </div>
  );
}

function SlantTab({ children }: { children: ReactNode }): JSX.Element {
  return (
    <div className="flex h-6 shrink-0 items-end border-b border-[#4a6fae] bg-linear-to-b from-[#c9dbf7] to-[#f4f9ff] pl-1">
      <button className="relative h-[21px] w-24 pl-8 text-left text-[13px] leading-5 font-bold text-black">
        <svg viewBox="0 0 96 21" className="absolute inset-0 h-[21px] w-24" aria-hidden="true">
          <path d="M0 21q2 0 4-2L19 4q3-3 6-3h68q2 0 2 2v18z" fill="#a9c6f0" stroke="#3f5f9f" />
          <path d="M10 15L20 5q3-3 6-3h67v8z" fill="#e6f0fd" />
        </svg>
        <span className="relative">{children}</span>
      </button>
    </div>
  );
}

function ParamPanel(): JSX.Element {
  const columns = (
    <colgroup>
      <col className="w-[33px]" />
      <col className="w-[119px]" />
      <col className="w-[80px]" />
      <col className="w-[60px]" />
      <col className="w-[59px]" />
      <col />
    </colgroup>
  );
  const cell = 'overflow-hidden border-r border-b border-[#bcd0ea] p-0 pl-px whitespace-nowrap';
  return (
    <div className="flex w-[378px] shrink-0 flex-col">
      <SlantTab>基本参数</SlantTab>
      <div className="flex min-h-0 flex-1 border-x-2 border-t-4 border-b-2 border-[#8fb4e8] bg-white text-black">
        <div className="flex min-w-0 flex-1 flex-col">
          <table className="w-full shrink-0 table-fixed border-separate border-spacing-0">
            {columns}
            <thead>
              <tr className="h-[33px]">
                <CornerCell />
                <th className={headCell}>项目</th>
                <th className={headCell}>参数</th>
                <th className={headCell}>单位</th>
                <th className={headCell}>修改</th>
                <th className="border-b border-[#8aa3c8] bg-[#cfdcee]" />
              </tr>
            </thead>
          </table>
          <div className="min-h-0 flex-1 overflow-hidden">
            <table className="-mt-[11px] w-full table-fixed border-separate border-spacing-0">
              {columns}
              <tbody>
                {paramRows.map(([name, value, unit], i) => {
                  const odd = i % 2 === 1;
                  return (
                    <tr key={name} className={cx('h-[22px]', odd ? 'bg-[#f3f3f3]' : 'bg-white')}>
                      <td className="border-r border-b border-[#8aa3c8] bg-linear-to-r from-[#d8e6f6] to-[#c6d7ec] p-0" />
                      <td className={cx(cell, !odd && 'bg-[#e7f0fb]')}>{name}</td>
                      <td className={cell}>{value}</td>
                      <td className={cx(cell, !odd && 'bg-[#e7f0fb]')}>{unit}</td>
                      <td className={cell}>Y</td>
                      <td className={cell} />
                    </tr>
                  );
                })}
              </tbody>
            </table>
          </div>
        </div>
        <div className="flex w-2.5 shrink-0 flex-col items-center bg-[#f7f7f7]">
          <span className="mt-1.5 h-0 w-0 border-b-5 border-l-5 border-b-[#444] border-l-transparent" />
          <span className="mt-[41px] flex h-[215px] w-2 items-center justify-center border border-[#8c939c] bg-[#eceef2]">
            <span className="h-[7px] w-1.5 border-y border-[#666]" />
          </span>
          <span className="mt-auto mb-1.5 h-0 w-0 border-t-5 border-l-5 border-t-[#444] border-l-transparent" />
        </div>
      </div>
    </div>
  );
}

function DetailArea(): JSX.Element {
  return (
    <div className="relative flex w-[500px] shrink-0 flex-col">
      <div role="tablist" className="flex h-[26px] shrink-0 bg-linear-to-b from-[#bdd0ea] to-[#e3edf9] text-black">
        <button role="tab" aria-selected="true" className="relative w-[68px] bg-linear-to-b from-[#1c55b4] to-[#3a7fe0] pb-1.5 text-[13px] leading-5 font-bold text-white">
          基本信息
          <span className="absolute bottom-0 left-7 border-x-5 border-b-5 border-x-transparent border-b-white" />
        </button>
        <button role="tab" aria-selected="false" className="px-2 pb-1">拓展信息</button>
        <button role="tab" aria-selected="false" className="px-[15px] pb-1">工时</button>
      </div>
      <div className="flex min-h-0 flex-1">
        <ParamPanel />
        <Splitter />
        <div className="flex min-w-0 flex-1 flex-col">
          <SlantTab>工艺备注</SlantTab>
          <div className="flex min-h-0 flex-1 flex-col border-t-4 border-[#8fb4e8] bg-[#f0f0f0]">
            <h3 className="h-[25px] shrink-0 border-b border-[#56697f] bg-linear-to-b from-[#f2f7fe] to-[#dde8f5] pl-1 leading-[22px] text-[#1f3a78]">工艺备注</h3>
          </div>
        </div>
      </div>
      <svg className="absolute top-[292px] left-16 h-4 w-[194px]" fill="none" aria-hidden="true">
        <path d="M5 9H150L157 8H190" stroke="#999" strokeWidth="3" opacity="0.4" />
        <path d="M3 7H153L159 6H186L190 7" stroke="#d8101c" strokeWidth="2" />
      </svg>
      <div role="tooltip" className="absolute top-[157px] left-[148px] w-[318px] border border-[#767676] bg-white px-1.5 pt-0.5 pb-px font-['Noto_Sans_CJK_SC',sans-serif] leading-[17px] whitespace-nowrap text-[#666]">
        【外形图纸2】：当需要提供多张图纸时，在此填写.（图2
        <br />）
      </div>
    </div>
  );
}

function StatusBar(): JSX.Element {
  return (
    <footer className="flex h-8 shrink-0 items-start border-t-2 border-[#56697f] bg-linear-to-b from-[#f3f9ff] to-[#dce8f6] px-2 pt-0.5 text-[#1f3a78]">
      <span className="mt-px grid w-[22px] grid-cols-2 gap-0.5">
        <span className="h-[9px] rounded-xs bg-[#1f3568]" />
        <span className="h-[9px] rounded-xs bg-[#1f3568]" />
        <span className="h-[9px] rounded-xs bg-[#1f3568]" />
        <span className="h-[9px] rounded-xs bg-[#1f3568]" />
      </span>
      <span className="mt-1 ml-2.5">信息中心</span>
      <svg viewBox="0 0 16 22" className="ml-3 h-[22px] w-4" fill="#1f3568" aria-hidden="true">
        <circle cx="8" cy="4" r="4" />
        <path d="M1 13q0-5 7-5t7 5v9H1z" />
      </svg>
      <span className="mt-1 ml-2">谷松</span>
      <span className="mt-1 flex-1 pl-3 text-center">兴森快捷 EMS工程系统 Version: 1.0.1.07</span>
      <a href="#changelog" className="mt-1 mr-px">版本更新记录</a>
    </footer>
  );
}

function EdsWindow(): JSX.Element {
  const caption = 'flex h-[30px] w-[46px] items-center justify-center';
  return (
    <div className="absolute top-[184px] right-5 -bottom-4 left-[512px] flex flex-col overflow-hidden bg-white font-['Noto_Sans_Mono_CJK_SC','Liberation_Serif','Noto_Sans_CJK_SC',monospace] text-[12px] leading-4 text-[#1e395b]">
      <header className="flex h-14 shrink-0 flex-col border-b-2 border-[#8496ad]">
        <div className="flex h-[39px]">
          <QuickAccess />
          <h1 className="mt-1 flex-1 pl-7 text-center leading-[18px] text-black">EDS工程系统</h1>
          <div className="flex">
            <button aria-label="最小化" className={caption}><span className="w-2.5 border-t border-black" /></button>
            <button aria-label="最大化" className={caption}><span className="h-2.5 w-2.5 border border-black" /></button>
            <button aria-label="关闭" className={caption}>
              <svg viewBox="0 0 11 11" className="h-[11px] w-[11px]" stroke="#000" aria-hidden="true"><path d="M0 0l11 11M11 0L0 11" /></svg>
            </button>
          </div>
        </div>
        <div className="flex h-[15px] items-start justify-between">
          <button className="ml-0.5 h-[15px] w-14 overflow-hidden rounded-t-xs border border-b-0 border-[#b85030] bg-linear-to-b from-[#ee7048] to-[#e65a38] leading-[22px] text-white">系统</button>
          <div className="flex h-full items-start pr-3">
            <button className="h-full overflow-hidden leading-[22px]">Style <Caret className="mb-0.5 ml-0.5" /></button>
            <svg viewBox="0 0 24 24" className="-mt-1.5 ml-2.5 h-[21px] w-6" fill="#2e8b57" aria-hidden="true">
              <path d="M0 3l11-1v9H0zM12 1.500L24 0v11H12zM0 13h11v9L0 21zM12 13h12v11l-12-1.500z" />
            </svg>
          </div>
        </div>
      </header>
      <div className="flex min-h-0 flex-1">
        <Rail />
        <Library />
        <main className="ml-[3px] flex min-w-0 flex-1 flex-col border-l border-[#56697f]">
          <div className="flex h-[34px] shrink-0 bg-[#b9cce4]">
            <button className="flex w-32 items-center bg-linear-to-b from-white to-[#f3f9ff] pl-1.5">
              <Bolt className="mb-1 h-5 w-4" />
              <strong className="ml-2 text-[13px] font-bold whitespace-nowrap">新流程指示</strong>
              <span className="ml-3.5 text-[14px]">×</span>
            </button>
            <button aria-label="更多标签" className="mr-1.5 ml-auto">
              <span className="block border-x-5 border-t-5 border-x-transparent border-t-[#1e395b]" />
            </button>
          </div>
          <Ribbon />
          <MainInfo />
          <div className="flex h-[5px] shrink-0 items-center justify-center gap-3 bg-linear-to-b from-[#7d8da2] to-[#b7c3d2] pl-[124px]">
            <Caret />
            <span className="w-9 border-t-2 border-dotted border-[#1f3a78]" />
            <Caret />
          </div>
          <div className="flex min-h-0 flex-1">
            <section className="flex min-w-0 flex-1 flex-col bg-[#edf4fd]">
              <GroupTitle className="pr-0.5">【CV144040A0】工艺流程</GroupTitle>
              <div className="flex min-h-0 flex-1 pr-1 pb-px">
                <DevicePanel />
                <Splitter />
                <ProcessPanel />
              </div>
            </section>
            <Splitter />
            <DetailArea />
          </div>
        </main>
      </div>
      <StatusBar />
    </div>
  );
}

export default function App(): JSX.Element {
  return (
    <div className="relative flex h-screen w-full flex-col overflow-hidden bg-white font-['Liberation_Serif',serif] text-black">
      <div className="flex h-5 shrink-0 items-start overflow-hidden pr-3 font-['Noto_Sans',sans-serif] text-[13px] text-[#8f8f8f]">
        <svg viewBox="0 0 13 12" className="h-3 w-[13px]" aria-hidden="true">
          <path d="M0 0h13v12H0z" fill="#333" />
          <path d="M0 0h11v10H0z" fill="#fff" />
          <path d="M2 2l7 7M9 2L2 9" stroke="#b0a000" strokeWidth="2" />
        </svg>
        <span className="-mt-1 ml-1.5 leading-[18px]">Graphic Editor 9.07b2 (00@HY-HYCAM-PC148 - Windows, pid:7764)</span>
        <div className="ml-auto flex h-full items-start gap-9 pr-3">
          <button aria-label="Minimize" className="mt-1 w-2.5 border-t border-[#8f8f8f]" />
          <button aria-label="Maximize" className="h-[9px] w-2.5 border border-t-0 border-[#8f8f8f]" />
          <button aria-label="Close">
            <svg viewBox="0 0 10 9" className="h-[9px] w-2.5" stroke="#8f8f8f" aria-hidden="true"><path d="M0-1l10 10M10-1L0 9" /></svg>
          </button>
        </div>
      </div>
      <div className="mr-[7px] flex shrink-0">
        <nav className="flex h-14 min-w-0 flex-1 items-center gap-[18px] border-y-2 border-r-2 border-[#5b8380] bg-[#9bdcdc] pr-3.5 pb-0.5 pl-1 text-[14px] font-bold shadow-[inset_0_2px_#d4f4f4]">
          {menus.map(([lead, hot, rest]) => (
            <button key={hot + rest}>
              {lead}
              {hot ? <span className="underline underline-offset-3">{hot}</span> : null}
              {rest}
            </button>
          ))}
          <button className="ml-auto">Help</button>
        </nav>
        <Brand />
      </div>
      <div className="mr-[7px] flex min-h-0 flex-1">
        <Sidebar />
        <Canvas />
        <Palette />
      </div>
      <EdsWindow />
    </div>
  );
}
